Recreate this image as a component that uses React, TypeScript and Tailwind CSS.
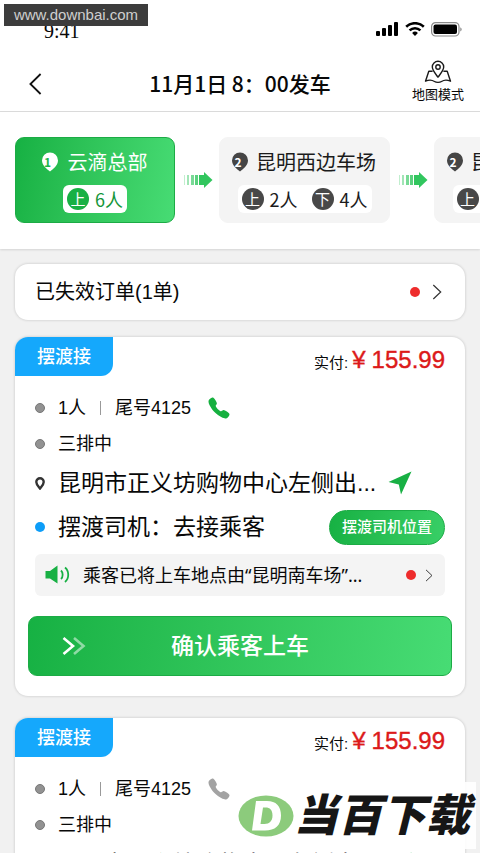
import type { ReactNode } from "react";
import { IoCall } from "react-icons/io5";

type Stop = { no: number; name: string; on: number; off?: number; active?: boolean };

const stops: Stop[] = [
  { no: 1, name: "云滴总部", on: 6, active: true },
  { no: 2, name: "昆明西边车场", on: 2, off: 4 },
  { no: 2, name: "昆明西边车场", on: 2, off: 4 },
];

const orders = [
  { id: 1, tail: "4125", price: "155.99", callable: true },
  { id: 2, tail: "4125", price: "155.99", callable: false },
];

function StatusBar() {
  return (
    <div className="flex h-14 items-end justify-between pr-[18px] pb-[13px] pl-11">
      <span className="font-['Liberation_Serif','Noto_Sans_CJK_SC',serif] text-xl leading-6">9:41</span>
      <div className="flex h-7 items-center gap-[6px]">
        <svg width="23" height="14" viewBox="0 0 23 14" aria-hidden="true">
          <rect x="0" y="9" width="4" height="5" rx="1" />
          <rect x="6" y="6" width="4" height="8" rx="1" />
          <rect x="12" y="3" width="4" height="11" rx="1" />
          <rect x="18" y="0" width="4" height="14" rx="1" />
        </svg>
        <svg width="20" height="14" viewBox="0 0 20 14" fill="none" stroke="#000" strokeWidth="2.6" aria-hidden="true">
          <path d="M1.2 4.8a12.6 12.6 0 0 1 17.6 0" />
          <path d="M4.6 8.4a7.8 7.8 0 0 1 10.8 0" />
          <path d="M10 14l-2.9-3a4.2 4.2 0 0 1 5.8 0z" fill="#000" stroke="none" />
        </svg>
        <svg width="31" height="15" viewBox="0 0 31 15" aria-hidden="true">
          <rect x="0.6" y="0.6" width="27.4" height="13.4" rx="4" fill="none" stroke="#8a8a8a" strokeWidth="1.2" />
          <rect x="2.5" y="2.5" width="23.5" height="9.6" rx="2" />
          <path d="M29.4 5.2c1.6.8 1.6 3.4 0 4.2z" fill="#777" />
        </svg>
      </div>
    </div>
  );
}

function Header() {
  return (
    <header className="grid h-14 grid-cols-[1fr_auto_1fr] items-center border-b border-[#dcdcdc] px-4 font-['Noto_Sans_CJK_SC',sans-serif]">
      <button type="button" aria-label="返回" className="w-fit pl-3">
        <svg width="15" height="22" viewBox="0 0 15 22" fill="none" stroke="#111" strokeWidth="1.8">
          <path d="M12.6 1L2.4 11l10.2 10" />
        </svg>
      </button>
      <h1 className="text-[21px] font-medium">11月1日 8：00发车</h1>
      <button type="button" className="flex flex-col items-center justify-self-end pb-1">
        <svg width="28" height="24" viewBox="0 0 28 24" fill="none" stroke="#1a1a1a" strokeWidth="1.4" strokeLinejoin="round" aria-hidden="true">
          <path d="M14 17.2C10.6 12.6 8.3 10 8.3 7a5.7 5.7 0 0 1 11.4 0c0 3-2.3 5.6-5.7 10.2z" />
          <circle cx="14" cy="7" r="2.2" />
          <path d="M8.6 11.2H4.8L1.5 21.2c4-1.8 6.5-1.4 9 .3 1.8 1.2 5.2 1.2 7 0 2.5-1.7 5-2.1 9-.3l-3.3-10h-3.8" />
        </svg>
        <span className="text-[13px] leading-5">地图模式</span>
      </button>
    </header>
  );
}

function StopPin({ no, active }: { no: number; active?: boolean }) {
  return (
    <span className={`relative flex size-5 items-center justify-center text-xs font-bold ${active ? "text-[#1cb548]" : "text-white"}`}>
      <svg className="absolute inset-0" width="20" height="20" viewBox="0 0 20 20" aria-hidden="true">
        <path d="M10 19.5C7 17 2 13.5 2 8.5a8 8 0 0 1 16 0c0 5-5 8.5-8 11z" fill={active ? "#fff" : "#454545"} />
      </svg>
      <span className="relative pr-1 leading-4">{no}</span>
    </span>
  );
}

function Count({ mark, n, active }: { mark: string; n: number; active?: boolean }) {
  return (
    <span className={`flex items-center gap-[6px] text-lg leading-7 ${active ? "text-[#15963a]" : "text-[#1b1b1b]"}`}>
      <span className={`flex size-[22px] items-center justify-center rounded-full text-[15px] leading-5 text-white ${active ? "bg-[#18b044]" : "bg-[#484848]"}`}>
        {mark}
      </span>
      {n}人
    </span>
  );
}

function StopArrow() {
  return (
    <svg className="mr-[6px] ml-2 shrink-0" width="30" height="18" viewBox="0 0 30 18" fill="#31c65e" aria-hidden="true">
      <rect x="1" y="4" width="1" height="10" opacity=".3" />
      <rect x="4" y="4" width="2" height="10" opacity=".45" />
      <rect x="8" y="4" width="3" height="10" opacity=".65" />
      <rect x="12" y="4" width="3" height="10" opacity=".8" />
      <path d="M16 4h5V1l8.5 8-8.5 8v-3h-5z" />
    </svg>
  );
}

function Stops() {
  return (
    <ol className="flex h-[137px] overflow-hidden bg-white pt-[25px] pl-[15px] font-['Noto_Sans_CJK_SC',sans-serif] shadow-[0_1px_2px_rgba(0,0,0,0.12)]">
      {stops.map((s, i) => (
        <li key={i} className="flex h-[86px] shrink-0 items-center">
          {i > 0 && <StopArrow />}
          <div
            className={`flex h-full flex-col items-center gap-[9px] rounded-[9px] pt-[10px] ${
              s.active
                ? "w-40 border border-[#1cab45] bg-linear-100 from-[#16b143] to-[#47dc74] text-white"
                : "w-[171px] border border-[#f4f4f4] bg-[#f4f4f4] text-[#1b1b1b]"
            }`}
          >
            <div className={`flex items-center pr-[3px] text-xl leading-7 ${s.active ? "gap-2" : "gap-[6px]"}`}>
              <StopPin no={s.no} active={s.active} />
              {s.name}
            </div>
            <div className="flex gap-[14px] rounded-md bg-white px-1">
              <Count mark="上" n={s.on} active={s.active} />
              {s.off && <Count mark="下" n={s.off} />}
            </div>
          </div>
        </li>
      ))}
    </ol>
  );
}

function RedDot() {
  return <span className="size-[10px] shrink-0 rounded-full bg-[#ee2c2c]" />;
}

function Chevron({ className }: { className: string }) {
  return (
    <svg className={className} viewBox="0 0 10 16" fill="none" stroke="#333" strokeWidth="1.2" aria-hidden="true">
      <path d="M1.3 1L8.7 8l-7.4 7" />
    </svg>
  );
}

function Row({ icon, className, children }: { icon: ReactNode; className: string; children: ReactNode }) {
  return (
    <div className={`flex items-center ${className}`}>
      <span className="flex w-[23px] shrink-0 items-center">{icon}</span>
      {children}
    </div>
  );
}

const grayDot = <span className="size-[10px] rounded-full border border-[#777] bg-[#929292]" />;

function OrderCard({ tail, price, callable }: { tail: string; price: string; callable: boolean }) {
  return (
    <article className="overflow-hidden rounded-[13px] bg-white pb-5 shadow-[0_0_3px_rgba(0,0,0,0.2)]">
      <div className="flex h-[39px] items-start justify-between pr-5">
        <span className="flex h-[39px] w-[98px] items-center justify-center rounded-br-xl bg-[#15a8fc] text-lg font-medium text-white">
          摆渡接
        </span>
        <p className="flex items-baseline gap-1 pt-[5px] leading-9">
          <span className="text-[15px]">实付:</span>
          <span className="flex items-baseline gap-[6px] text-2xl leading-9 text-[#dc1a1a] [-webkit-text-stroke:0.4px_#dc1a1a]">
            <span>¥</span>
            <span>{price}</span>
          </span>
        </p>
      </div>

      <div className="px-5 pt-[14px]">
        <Row className="h-9 text-lg" icon={grayDot}>
          <span>1人</span>
          <span className="mx-[14px] h-[14px] w-px bg-[#999]" />
          <span>尾号{tail}</span>
          <button
            type="button"
            aria-label="拨打电话"
            className={`ml-4 ${callable ? "text-[#16b03f]" : "text-[#a3a3a3]"}`}
          >
            <IoCall size={24} />
          </button>
        </Row>
        <Row className="h-9 text-lg" icon={grayDot}>
          三排中
        </Row>
        <Row
          className="h-[42px] text-[23px]"
          icon={
            <svg width="10" height="13" viewBox="0 0 10 13" aria-hidden="true">
              <path d="M5 11.5C3.5 9.5 1.3 7.5 1.3 5a3.7 3.7 0 0 1 7.4 0c0 2.5-2.2 4.5-3.7 6.5z" fill="#fff" stroke="#333" strokeWidth="2.4" />
            </svg>
          }
        >
          <span>昆明市正义坊购物中心左侧出...</span>
          <button type="button" aria-label="导航" className="ml-3">
            <svg width="24" height="24" viewBox="0 0 24 24" fill="#18b044">
              <path d="M23.5 .5L.5 11l10.3 2.5L13 23.5z" />
            </svg>
          </button>
        </Row>
        <Row className="h-[46px] text-[23px]" icon={<span className="size-[10px] rounded-full bg-[#0d9df8]" />}>
          <span>摆渡司机：去接乘客</span>
          <button
            type="button"
            className="ml-auto h-[35px] rounded-full border border-[#1cab45] bg-linear-100 from-[#16b143] to-[#38cf66] px-3 text-[15px] font-medium text-white"
          >
            摆渡司机位置
          </button>
        </Row>
        <button
          type="button"
          className="mt-1 flex h-[42px] w-full items-center rounded-md bg-[#f4f4f4] pr-3 pl-[10px] font-['Noto_Sans','Noto_Sans_CJK_SC',sans-serif] text-lg"
        >
          <svg className="mr-3 shrink-0" width="26" height="20" viewBox="0 0 26 20" aria-hidden="true">
            <path d="M.5 6H5l7.5-5.5v18L5 13.5H.5z" fill="#18b044" />
            <path d="M16 5.5c2.2 2 2.2 6.5 0 8.5M20 2.5c4.3 3.5 4.3 11 0 14.5" fill="none" stroke="#18b044" strokeWidth="1.8" />
          </svg>
          <span>乘客已将上车地点由“昆明南车场”...</span>
          <span className="ml-auto flex items-center gap-[9px]">
            <RedDot />
            <Chevron className="h-[13px] w-2" />
          </span>
        </button>
      </div>

      <div className="px-[13px] pt-5">
        <button
          type="button"
          className="grid h-[60px] w-full grid-cols-[1fr_auto_1fr] items-center rounded-[9px] border border-[#1cab45] bg-linear-100 from-[#16b143] to-[#47dc74] text-[23px] font-medium text-white"
        >
          <svg className="ml-[33px]" width="24" height="18" viewBox="0 0 24 18" fill="none" stroke="#fff" strokeWidth="2.6" aria-hidden="true">
            <path d="M1.5 1L11 9l-9.5 8" />
            <path d="M12 1l9.5 8-9.5 8" opacity=".5" />
          </svg>
          <span>确认乘客上车</span>
        </button>
      </div>
    </article>
  );
}

function Watermarks() {
  return (
    <>
      <span className="absolute top-1 left-1 flex h-[22px] w-36 items-center justify-center bg-[#3c3c3c] text-[15px] text-[#cfcfcf]">
        www.downbai.com
      </span>
      <div className="absolute right-1 bottom-1 flex h-[67px] items-center bg-white/90 pr-[6px] pl-1">
        <svg width="56" height="42" viewBox="0 0 56 42" role="img" aria-label="D">
          <ellipse cx="28" cy="21" rx="27.5" ry="20.5" fill="#8ccb7c" />
          <path fillRule="evenodd" fill="#fff" d="M18 6h11c9 0 14 5 14 14.5C43 30.5 37 35.5 27 35.5H14zM25 12.5l-2.500 16.500h4c5 0 8-3 8-8.500 0-5.500-2.500-8-7-8z" />
        </svg>
        <span className="text-[44px] leading-none font-black text-[#161616] italic">当百下载</span>
      </div>
    </>
  );
}

export default function App() {
  return (
    <div className="relative h-screen overflow-hidden bg-[#f1f1f1] font-['Liberation_Sans','Noto_Sans_CJK_SC',sans-serif] text-[#080808]">
      <div className="bg-white">
        <StatusBar />
        <Header />
        <Stops />
      </div>
      <main className="px-[15px] pt-[15px]">
        <button type="button" className="flex h-14 w-full items-center justify-between rounded-[13px] bg-white px-5 text-xl shadow-[0_0_3px_rgba(0,0,0,0.2)]">
          <span>已失效订单(1单)</span>
          <span className="flex items-center gap-3 pr-[3px]">
            <RedDot />
            <Chevron className="h-4 w-[10px]" />
          </span>
        </button>
        <div className="mt-[17px] flex flex-col gap-[22px]">
          {orders.map((o) => (
            <OrderCard key={o.id} tail={o.tail} price={o.price} callable={o.callable} />
          ))}
        </div>
      </main>
      <Watermarks />
    </div>
  );
}
